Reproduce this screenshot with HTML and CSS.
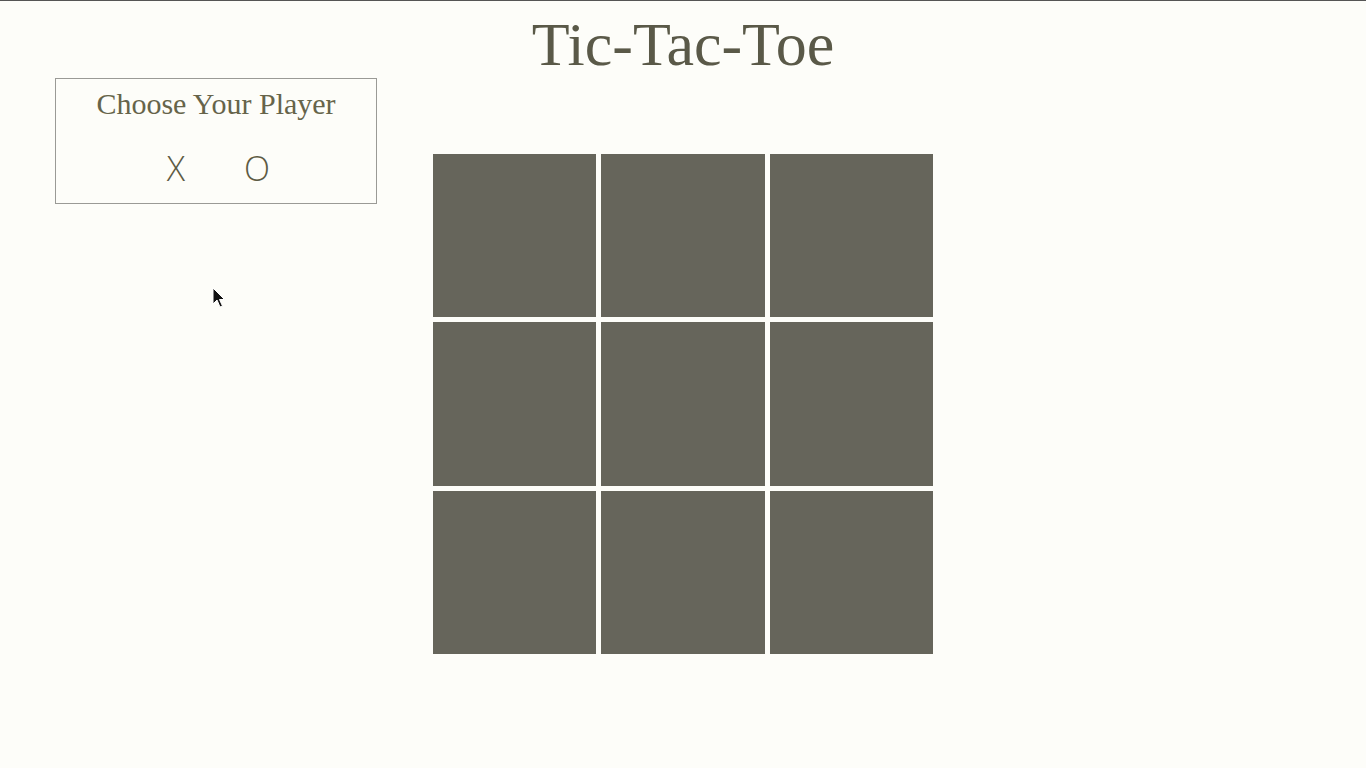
FILE: index.html
```html
<!DOCTYPE html>
<html lang="en">
<head>
<meta charset="utf-8">
<title>Tic-Tac-Toe</title>
<link rel="stylesheet" href="styles.css">
</head>
<body>
<h1 class="title">Tic-Tac-Toe</h1>
<main class="layout">
  <aside class="side">
    <section class="chooser">
      <h2 class="chooser-title">Choose Your Player</h2>
      <div class="choices">
        <button class="choice">X</button>
        <button class="choice">O</button>
      </div>
    </section>
  </aside>
  <div class="board">
    <div class="cell"></div><div class="cell"></div><div class="cell"></div>
    <div class="cell"></div><div class="cell"></div><div class="cell"></div>
    <div class="cell"></div><div class="cell"></div><div class="cell"></div>
  </div>
  <div class="spacer"></div>
</main>
<svg class="cursor" width="14" height="22" viewBox="0 0 14 22"><path d="M1 1 L1 17 L5 13 L8 20 L10.5 19 L7.5 12.5 L12.5 12.5 Z" fill="#111" stroke="#fff" stroke-width="1"/></svg>
</body>
</html>
```
FILE: styles.css
```css
html { background: #fdfdf9; }
body {
  margin: 0;
  min-height: 767px;
  border-top: 1px solid #555;
  font-family: "Liberation Serif", "DejaVu Serif", serif;
  color: #5d5b44;
  position: relative;
}
.title {
  margin: 0;
  padding-top: 12px;
  height: 65px;
  text-align: center;
  font-weight: 400;
  font-size: 62px;
  line-height: 62px;
  color: #5a5948;
}
.layout {
  display: grid;
  grid-template-columns: 1fr 500px 1fr;
}
.side { padding-left: 55px; }
.chooser {
  width: 320px;
  height: 124px;
  border: 1px solid #9a9a96;
  text-align: center;
}
.chooser-title {
  margin: 0;
  padding-top: 8px;
  font-weight: 400;
  font-size: 30px;
  line-height: 34px;
  color: #66644a;
}
.choices {
  display: flex;
  justify-content: center;
  gap: 56px;
  margin-top: 30px;
}
.choice {
  background: none;
  border: 0;
  padding: 0;
  width: 24px;
  font-family: "Open Sans", sans-serif;
  font-weight: 300;
  font-size: 34px;
  line-height: 34px;
  color: #5d5b44;
  cursor: pointer;
}
.board {
  margin-top: 76px;
  width: 500px;
  height: 500px;
  display: grid;
  grid-template-columns: repeat(3, 1fr);
  grid-template-rows: repeat(3, 1fr);
  gap: 5px;
}
.cell { background: #66655b; }
.cursor {
  position: absolute;
  left: 212px;
  top: 286px;
}
```
